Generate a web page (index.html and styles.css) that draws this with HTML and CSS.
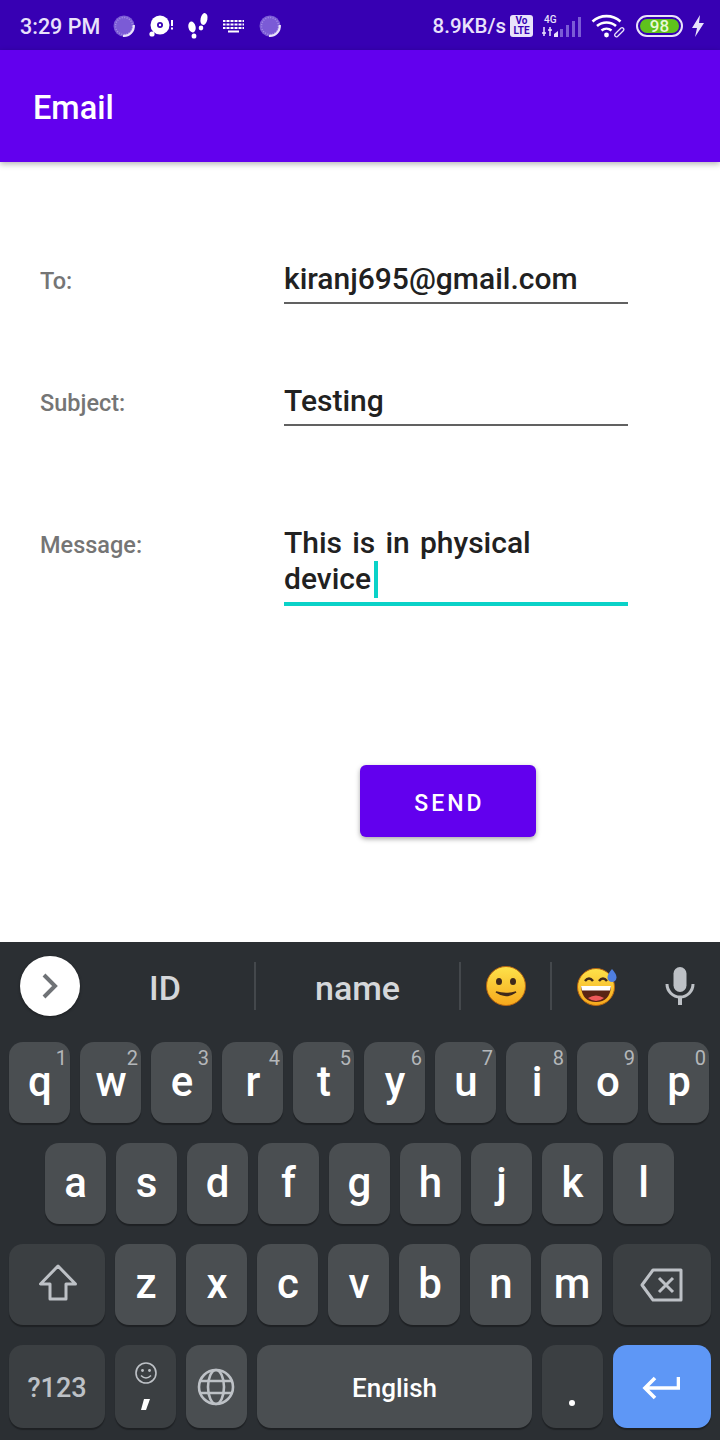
FILE: index.html
```html
<!DOCTYPE html>
<html lang="en">
<head>
    <meta charset="UTF-8">
    <meta name="viewport" content="width=device-width, initial-scale=1.0">
    <title>Email</title>
    <link rel="stylesheet" href="styles.css">
</head>
<body>
   <div class="status-bar">
      <span class="clock">3:29 PM</span>
      <div class="status-icons-left">
         <svg width="24" height="24" viewBox="0 0 24 24"><circle cx="12" cy="12" r="10.500" fill="#7b5bd6"/><circle cx="12" cy="12" r="8.500" fill="none" stroke="#a48de6" stroke-width="1.500" stroke-dasharray="1 1.500"/><path d="M21.800 11a10 10 0 0 1-10.800 10.800" fill="none" stroke="#e9e2fb" stroke-width="2.200"/></svg>
         <svg width="26" height="24" viewBox="0 0 26 24"><circle cx="11" cy="11" r="9.500" fill="#fff"/><circle cx="11" cy="11" r="3" fill="#3700b3"/><circle cx="11" cy="11" r="1.200" fill="#fff"/><circle cx="3" cy="20" r="2.600" fill="#fff"/><rect x="22" y="6" width="2" height="6" fill="#fff"/><rect x="22" y="13.500" width="2" height="2" fill="#fff"/></svg>
         <svg width="22" height="28" viewBox="2 0 22 28"><ellipse cx="6" cy="15" rx="3.600" ry="5.500" fill="#fff" transform="rotate(-12 6 15)"/><ellipse cx="8" cy="24" rx="2.400" ry="2.600" fill="#fff"/><ellipse cx="18" cy="7" rx="3.400" ry="6" fill="#fff" transform="rotate(12 18 7)"/><ellipse cx="15" cy="16" rx="2.300" ry="2.400" fill="#fff"/></svg>
         <svg width="22" height="14" viewBox="0 0 22 14"><path d="M0 1h21v2H0zM0 4.500h21v2H0zM0 8h21v2H0zM5 11.500h11v2H5z" fill="#fff"/><path d="M3 0v11M7 0v11M11 0v11M15 0v11M19 0v11" stroke="#3700b3" stroke-width="1"/></svg>
         <svg width="24" height="24" viewBox="0 0 24 24"><circle cx="12" cy="12" r="10.500" fill="#7b5bd6"/><circle cx="12" cy="12" r="8.500" fill="none" stroke="#a48de6" stroke-width="1.500" stroke-dasharray="1 1.500"/><path d="M21.800 11a10 10 0 0 1-10.800 10.800" fill="none" stroke="#e9e2fb" stroke-width="2.200"/></svg>
      </div>
      <div class="status-right">
         <span class="speed">8.9KB/s</span>
         <div class="volte"><span>Vo</span><span>LTE</span></div>
         <svg class="signal" width="44" height="24" viewBox="0 0 44 24">
            <text x="3" y="9" class="signal-label">4G</text>
            <path d="M3 13v9M1 19h4M9 13v9M7 16h4" stroke="#e9e2fb" stroke-width="1.500"/>
            <path d="M13 23v-3l4-3v6z" fill="#e9e2fb"/>
            <path d="M19 23v-8h3v8zM25 23v-12h3v12zM31 23v-16h3v16zM37 23v-20h3v20z" fill="#7b5bd6"/>
         </svg>
         <svg class="wifi" width="34" height="26" viewBox="0 0 34 26">
            <path d="M1.500 8.500a21 21 0 0 1 28 0M6 13a14.500 14.500 0 0 1 19 0M10.500 17.500a8 8 0 0 1 10 0" fill="none" stroke="#fff" stroke-width="2.600"/>
            <circle cx="15.500" cy="22" r="2.400" fill="#fff"/>
            <path d="M24 21l6-6a1.800 1.800 0 0 1 2.500 2.500l-6 6a1.800 1.800 0 0 1-2.500-2.500z" fill="none" stroke="#e9e2fb" stroke-width="1.300"/>
         </svg>
         <div class="battery"><div class="battery-fill">98</div></div>
         <svg width="14" height="22" viewBox="0 0 14 22"><path d="M9 0L1 13h5l-2 9 9-14H8z" fill="#e9e2fb"/></svg>
      </div>
   </div>

   <header class="app-bar">Email</header>

   <main class="form">
      <div class="form-row row-to">
         <label class="form-label">To:</label>
         <div class="field">kiranj695@gmail.com</div>
      </div>
      <div class="form-row row-subject">
         <label class="form-label">Subject:</label>
         <div class="field">Testing</div>
      </div>
      <div class="form-row row-message">
         <label class="form-label">Message:</label>
         <div class="field field-active">This is in physical<br>device<span class="cursor"></span></div>
      </div>
      <div class="button-row">
         <button type="button" class="send">SEND</button>
      </div>
   </main>

   <section class="keyboard">
      <div class="suggestions">
         <div class="expand">
            <svg width="16" height="26" viewBox="0 0 16 26"><path d="M2 2l11 11L2 24" fill="none" stroke="#6f7276" stroke-width="4"/></svg>
         </div>
         <div class="suggestion suggestion-id">ID</div>
         <div class="divider"></div>
         <div class="suggestion suggestion-name">name</div>
         <div class="divider"></div>
         <div class="emoji-slot">
            <svg width="42" height="42" viewBox="0 0 42 42">
               <defs>
                  <linearGradient id="face" x1="0" y1="0" x2="0" y2="1"><stop offset="0" stop-color="#fde24a"/><stop offset="1" stop-color="#f6a81c"/></linearGradient>
               </defs>
               <circle cx="21" cy="21" r="19.500" fill="url(#face)" stroke="#b8650f" stroke-width="1"/>
               <ellipse cx="14" cy="16.500" rx="3" ry="3.500" fill="#40291a"/>
               <ellipse cx="28" cy="16.500" rx="3" ry="3.500" fill="#40291a"/>
               <path d="M11 27q10 7 20 0q-10 3-20 0z" fill="#40291a" stroke="#40291a" stroke-width="1.500"/>
            </svg>
         </div>
         <div class="divider"></div>
         <div class="emoji-slot">
            <svg width="42" height="42" viewBox="0 0 42 42">
               <circle cx="20" cy="22" r="18.500" fill="url(#face)" stroke="#b8650f" stroke-width="1"/>
               <path d="M9 16q4-5 8 0M23 16q4-5 8 0" fill="none" stroke="#40291a" stroke-width="2.500"/>
               <path d="M5 21h30q-1 16-15 16T5 21z" fill="#5a2314"/>
               <path d="M5 21h30l-1 4.500H6z" fill="#fff"/>
               <path d="M12 33q8-5 16 0q-8 6-16 0z" fill="#ef5a5a"/>
               <path d="M36 4q4.500 5 4.500 8.500a4.500 4.500 0 0 1-9 0q0-3.500 4.500-8.500z" fill="#4f7fe0"/>
            </svg>
         </div>
         <div class="mic">
            <svg width="30" height="38" viewBox="0 0 30 38"><rect x="8.500" y="0" width="13" height="25" rx="6.500" fill="#bdc1c6"/><path d="M2 17a13 13 0 0 0 26 0" fill="none" stroke="#bdc1c6" stroke-width="3"/><rect x="13" y="29" width="4" height="9" fill="#bdc1c6"/></svg>
         </div>
      </div>

      <div class="keys">
         <div class="key-row">
            <div class="key">q<span class="hint">1</span></div>
            <div class="key">w<span class="hint">2</span></div>
            <div class="key">e<span class="hint">3</span></div>
            <div class="key">r<span class="hint">4</span></div>
            <div class="key">t<span class="hint">5</span></div>
            <div class="key">y<span class="hint">6</span></div>
            <div class="key">u<span class="hint">7</span></div>
            <div class="key">i<span class="hint">8</span></div>
            <div class="key">o<span class="hint">9</span></div>
            <div class="key">p<span class="hint">0</span></div>
         </div>
         <div class="key-row key-row-home">
            <div class="key">a</div>
            <div class="key">s</div>
            <div class="key">d</div>
            <div class="key">f</div>
            <div class="key">g</div>
            <div class="key">h</div>
            <div class="key">j</div>
            <div class="key">k</div>
            <div class="key">l</div>
         </div>
         <div class="key-row">
            <div class="key key-wide key-dark">
               <svg width="40" height="38" viewBox="0 0 40 38"><path d="M20 2L2.500 20h9.500v15h16V20h9.500z" fill="none" stroke="#bdc1c6" stroke-width="3" stroke-linejoin="round"/></svg>
            </div>
            <div class="key">z</div>
            <div class="key">x</div>
            <div class="key">c</div>
            <div class="key">v</div>
            <div class="key">b</div>
            <div class="key">n</div>
            <div class="key">m</div>
            <div class="key key-action key-dark">
               <svg width="44" height="34" viewBox="0 0 44 34"><path d="M13 2h28v30H13L2 17z" fill="none" stroke="#bdc1c6" stroke-width="3" stroke-linejoin="round"/><path d="M19 10l14 14M33 10L19 24" stroke="#bdc1c6" stroke-width="3"/></svg>
            </div>
         </div>
         <div class="key-row key-row-bottom">
            <div class="key key-wide key-dark key-symbols">?123</div>
            <div class="key key-dark key-comma">
               <svg width="24" height="24" viewBox="0 0 24 24"><circle cx="12" cy="12" r="10" fill="none" stroke="#bdc1c6" stroke-width="1.600"/><circle cx="8.500" cy="9.500" r="1.400" fill="#bdc1c6"/><circle cx="15.500" cy="9.500" r="1.400" fill="#bdc1c6"/><path d="M7 14.500q5 5 10 0" fill="none" stroke="#bdc1c6" stroke-width="1.600"/></svg>
               <svg width="10" height="14" viewBox="0 0 10 14"><path d="M3 0h6L5 11H0z" fill="#fff"/></svg>
            </div>
            <div class="key key-globe">
               <svg width="38" height="38" viewBox="0 0 38 38" fill="none" stroke="#bdc1c6" stroke-width="2.600"><circle cx="19" cy="19" r="17"/><ellipse cx="19" cy="19" rx="8" ry="17"/><path d="M3.500 13h31M3.500 25h31"/></svg>
            </div>
            <div class="key key-space">English</div>
            <div class="key key-dark key-period"><span class="period-dot"></span></div>
            <div class="key key-action key-enter">
               <svg width="38" height="26" viewBox="0 0 38 26"><path d="M36.500 2v11H4M13 3L3 13l10 10" fill="none" stroke="#fff" stroke-width="3.600"/></svg>
            </div>
         </div>
      </div>
   </section>
</body>
</html>
```

FILE: styles.css
```css
* {
    box-sizing: border-box;
}

body {
    font-family: 'Roboto', sans-serif;
    background-color: #fff;
    margin: 0;
    padding: 0;
    width: 720px;
    height: 1440px;
    display: flex;
    flex-direction: column;
    overflow: hidden;
}

/* status bar */
.status-bar {
    height: 50px;
    background-color: #3700b3;
    color: #e9e2fb;
    display: flex;
    align-items: center;
    padding: 2px 15px 0 20px;
    flex-shrink: 0;
}

.clock {
    font-size: 21.500px;
    font-weight: 500;
    width: 92px;
}

.status-icons-left {
    display: flex;
    align-items: center;
    gap: 13px;
}

.status-right {
    margin-left: auto;
    display: flex;
    align-items: center;
}

.speed {
    font-size: 20.500px;
    font-weight: 500;
    margin-right: 4px;
}

.volte {
    width: 23px;
    height: 22px;
    background-color: #e9e2fb;
    color: #3700b3;
    border-radius: 3px;
    font-size: 10px;
    font-weight: 700;
    line-height: 10px;
    display: flex;
    flex-direction: column;
    align-items: center;
    justify-content: center;
    margin-right: 8px;
}

.signal-label {
    font-size: 10px;
    font-weight: 500;
    fill: #e9e2fb;
}

.signal {
    margin-right: 6px;
}

.wifi {
    margin-right: 11px;
}

.battery {
    width: 47px;
    height: 22px;
    border: 2px solid #e9e2fb;
    border-radius: 11px;
    padding: 2px;
    margin-right: 8px;
}

.battery-fill {
    height: 100%;
    background-color: #5fc21c;
    border-radius: 7px;
    color: #e9f8d8;
    font-size: 17px;
    font-weight: 500;
    line-height: 14px;
    text-align: center;
}

/* app bar */
.app-bar {
    height: 112px;
    background-color: #6200ee;
    color: #fff;
    font-size: 32.500px;
    font-weight: 500;
    padding: 4px 33px 0;
    display: flex;
    align-items: center;
    flex-shrink: 0;
    box-shadow: 0 2px 6px rgba(0, 0, 0, 0.3);
    position: relative;
}

/* form */
.form {
    flex: 1;
    padding: 98px 92px 0 40px;
}

.form-row {
    display: flex;
    align-items: flex-start;
}

.row-subject {
    margin-top: 78px;
}

.row-message {
    margin-top: 99px;
}

.form-label {
    width: 244px;
    flex-shrink: 0;
    font-size: 23.500px;
    font-weight: 500;
    color: #757575;
    line-height: 36px;
    padding-top: 3px;
}

.row-message .form-label {
    padding-top: 2px;
}

.field {
    flex: 1;
    font-size: 30px;
    font-weight: 500;
    word-spacing: 2.700px;
    color: #212121;
    line-height: 36px;
    padding-top: 1px;
    padding-bottom: 5px;
    border-bottom: 2px solid #616161;
}

.field-active {
    border-bottom: 4px solid #0ad2c8;
    padding-top: 0;
    padding-bottom: 4px;
}

.cursor {
    display: inline-block;
    width: 4px;
    height: 37px;
    margin-left: 3px;
    background-color: #0ad2c8;
    vertical-align: -9px;
}

.button-row {
    display: flex;
    padding-left: 320px;
    margin-top: 159px;
}

.send {
    width: 176px;
    height: 72px;
    background-color: #6200ee;
    color: #fff;
    border: none;
    border-radius: 6px;
    font-family: 'Roboto', sans-serif;
    font-size: 23px;
    font-weight: 500;
    letter-spacing: 3px;
    padding: 4px 0 0 3px;
    box-shadow: 0 2px 5px rgba(0, 0, 0, 0.35);
}

/* keyboard */
.keyboard {
    height: 498px;
    flex-shrink: 0;
    background-color: #2b2f33;
    padding: 0 9px;
}

.suggestions {
    height: 100px;
    display: flex;
    align-items: center;
    color: #d5d7da;
    font-size: 34px;
    font-weight: 500;
    padding-bottom: 12px;
}

.expand {
    width: 60px;
    height: 60px;
    margin: 0 0 0 11px;
    border-radius: 50%;
    background-color: #fff;
    display: flex;
    align-items: center;
    justify-content: center;
    box-shadow: 0 1px 3px rgba(0, 0, 0, 0.4);
    flex-shrink: 0;
}

.suggestion {
    text-align: center;
    padding-top: 3px;
}

.suggestion-id {
    width: 174px;
    padding-right: 4px;
}

.suggestion-name {
    width: 203px;
}

.divider {
    width: 2px;
    height: 48px;
    background-color: #44484c;
    flex-shrink: 0;
}

.emoji-slot {
    width: 89px;
    display: flex;
    justify-content: center;
}

.mic {
    margin-left: 24px;
    display: flex;
}

.keys {
    display: flex;
    flex-direction: column;
    gap: 20px;
}

.key-row {
    display: flex;
    gap: 10px;
    height: 81px;
}

.key-row-home {
    padding-left: 35.500px;
}

.key-row-bottom {
    height: 83px;
}

.key {
    flex: 0 0 61px;
    position: relative;
    background-color: #4a4e51;
    color: #fff;
    border-radius: 14px;
    box-shadow: 0 2px 1px rgba(0, 0, 0, 0.3);
    font-size: 42px;
    font-weight: 500;
    padding: 0 0 3px 1px;
    display: flex;
    align-items: center;
    justify-content: center;
}

.hint {
    position: absolute;
    top: 4px;
    right: 3px;
    font-size: 20px;
    font-weight: 400;
    color: #b4b7ba;
}

.key-wide {
    flex: 0 0 96px;
}

.key-action {
    flex: 0 0 98px;
    margin-left: auto;
    padding: 1px 0 0;
}

.key-dark {
    background-color: #3b3f42;
}

.key-symbols {
    color: #bdc1c6;
    font-size: 27px;
    padding: 2px 0 0;
}

.key-comma {
    flex-direction: column;
    gap: 14px;
    padding: 0;
}

.key-globe {
    padding: 1px 1px 0 0;
}

.key-space {
    flex: 0 0 275px;
    font-size: 26px;
    padding: 2px 0 0;
}

.key-period {
    align-items: flex-end;
    padding: 0 1px 22px 0;
}

.period-dot {
    width: 6px;
    height: 6px;
    border-radius: 50%;
    background-color: #fff;
}

.key-enter {
    background-color: #5e97f6;
    padding: 3px 2px 0 0;
}
```
